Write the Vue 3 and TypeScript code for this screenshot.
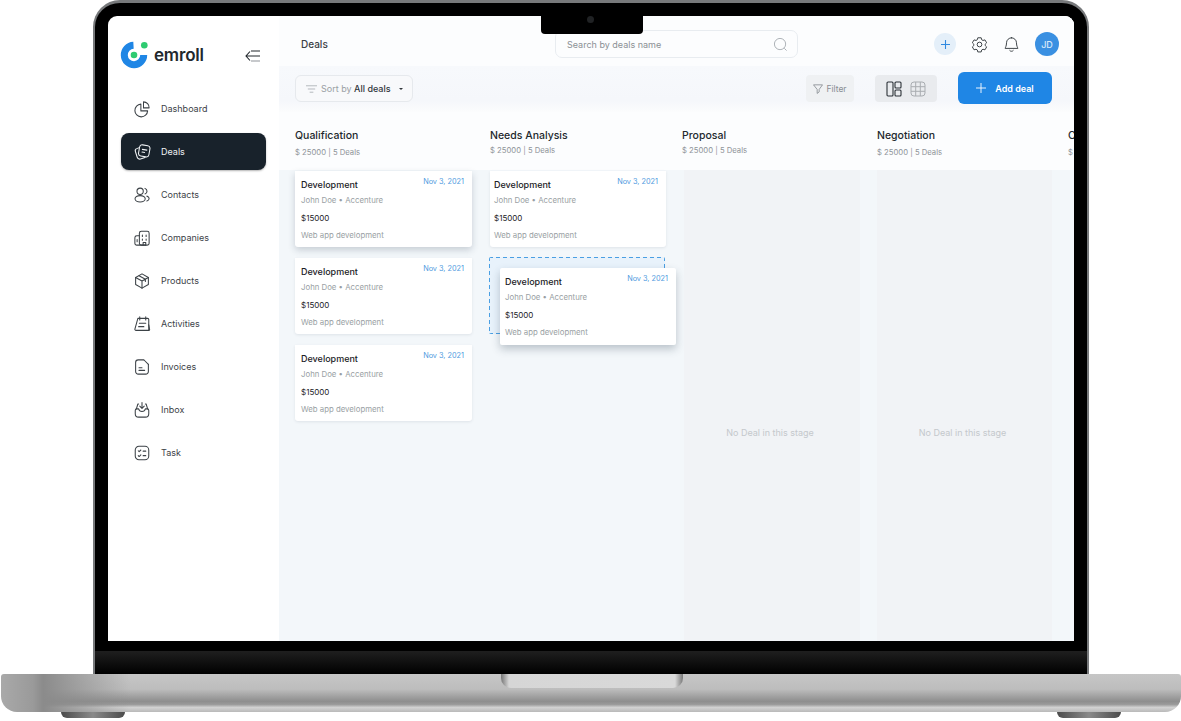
<script setup lang="ts">
const navItems = [
  { label: "Dashboard", icon: "dashboard" },
  { label: "Deals", icon: "deals", active: true },
  { label: "Contacts", icon: "contacts" },
  { label: "Companies", icon: "companies" },
  { label: "Products", icon: "products" },
  { label: "Activities", icon: "activities" },
  { label: "Invoices", icon: "invoices" },
  { label: "Inbox", icon: "inbox" },
  { label: "Task", icon: "task" },
];

const stages = ["Qualification", "Needs Analysis", "Proposal", "Negotiation", "Closed"];

const columns = [
  { id: "qualification", cards: 3 },
  { id: "needs", cards: 1, dropzone: true },
  { id: "proposal", cards: 0 },
  { id: "negotiation", cards: 0 },
];
</script>

<template>
  <div class="stage">
    <div class="lid">
      <div class="notch"><span class="camera"></span></div>
      <div class="screen">
        <aside class="sidebar">
          <div class="brand">
            <svg class="logo" viewBox="0 0 28 28" width="28" height="28">
              <path d="M13.500 4.300A9.700 9.700 0 1 0 23.700 14" fill="none" stroke="#1f86e5" stroke-width="7" />
              <circle cx="14" cy="14" r="3.300" fill="#2ecb71" />
              <circle cx="24.300" cy="4.300" r="3.300" fill="#2ecb71" />
            </svg>
            <span class="brand-name">emroll</span>
            <svg class="collapse" viewBox="0 0 16 12" width="16" height="12" fill="none" stroke="#22282d" stroke-width="1.100">
              <path d="M5 1.500 1 6l4 4.500M1 6h14" />
              <path d="M6 1h9" />
              <path d="M6 11h9" stroke="#8f9499" />
            </svg>
          </div>
          <nav class="nav">
            <a v-for="item in navItems" :key="item.label" class="nav-item" :class="{ 'nav-item--active': item.active }">
              <svg class="nav-icon" viewBox="0 0 24 24" width="18" height="18" fill="none" stroke="currentColor" stroke-width="1.400" stroke-linecap="round" stroke-linejoin="round">
                <template v-if="item.icon === 'dashboard'">
                  <path d="M10.500 5.500a8.500 8.500 0 1 0 9 9h-9z" />
                  <path d="M14 2.500a7.500 7.500 0 0 1 7.500 8H14z" />
                </template>
                <template v-else-if="item.icon === 'deals'">
                  <rect x="8" y="3" width="14" height="15" rx="3.500" transform="rotate(10 15 10.500)" />
                  <path d="M7.500 6.500 5 7.500a3 3 0 0 0-1.800 3.800l2.400 7.700A3.500 3.500 0 0 0 10 21.300l6-2" />
                  <path d="M12.500 8.500l6 1M12 12l3.500.6" />
                </template>
                <template v-else-if="item.icon === 'contacts'">
                  <circle cx="9.500" cy="7" r="4.200" />
                  <ellipse cx="9.500" cy="17" rx="6.800" ry="4.200" />
                  <path d="M16 3.200a3.900 3.900 0 0 1 0 7.400M18.500 13.500c2 .6 3 1.900 3 3.300s-1 2.700-3 3.300" />
                </template>
                <template v-else-if="item.icon === 'companies'">
                  <rect x="8.500" y="3" width="13" height="18.500" rx="2.500" />
                  <path d="M8.500 9H5a2.500 2.500 0 0 0-2.500 2.500v7.500A2.500 2.500 0 0 0 5 21.500h11.500" />
                  <path d="M12.500 8v2M17.500 8v2M12.500 13.500v1.500M17.500 13.500v1.500M13.500 21.500V18h3.500v3.500M5.500 14v3" />
                </template>
                <template v-else-if="item.icon === 'products'">
                  <path d="M12 2.500l8.500 4.800v9.400L12 21.500l-8.500-4.800V7.300z" />
                  <path d="M3.500 7.300 12 12l8.500-4.700M12 12v9.500M8 5l8.500 4.700v3" />
                </template>
                <template v-else-if="item.icon === 'activities'">
                  <path d="M6.500 4.500h13a1.500 1.500 0 0 1 1.500 1.500v14.500H4a1.500 1.500 0 0 1-1.500-1.800z" />
                  <path d="M21 20.500c1 0 1.500-.5 1-2L21 13M9 2.500v4M17 2.500v4M8.500 11h8.500M7.500 15.500h7" />
                </template>
                <template v-else-if="item.icon === 'invoices'">
                  <path d="M14.500 2.500H7A3.500 3.500 0 0 0 3.500 6v12A3.500 3.500 0 0 0 7 21.500h10a3.500 3.500 0 0 0 3.500-3.500V8.500" />
                  <path d="M15 3l5.500 5.500M8 13h4M8 16.500h7.500" />
                </template>
                <template v-else-if="item.icon === 'inbox'">
                  <path d="M7.500 4H6.500L4.500 10.500M16.500 4h1l2 6.500" />
                  <path d="M12 2v7.500M9 6.800l3 3 3-3" />
                  <path d="M3 12.500c0-1 .8-2 2-2h2.500c.6 2.500 2.500 3.500 4.500 3.500s3.900-1 4.500-3.500H19c1.200 0 2 1 2 2V17a4.500 4.500 0 0 1-4.500 4.500h-9A4.500 4.500 0 0 1 3 17z" />
                </template>
                <template v-else>
                  <rect x="3" y="3" width="18" height="18" rx="5" />
                  <path d="M7 9l1.200 1.200L10.500 8M13.500 9.500H17M7 15.500l1.200 1.200 2.300-2.200M13.500 15.500H17" />
                </template>
              </svg>
              <span>{{ item.label }}</span>
            </a>
          </nav>
        </aside>

        <main class="main">
          <header class="topbar">
            <h1 class="page-title">Deals</h1>
            <div class="search">
              <span>Search by deals name</span>
              <svg viewBox="0 0 16 16" width="15" height="15" fill="none" stroke="#a9aeb3" stroke-width="1">
                <circle cx="7.500" cy="7.500" r="6" />
                <path d="M12 12l2.500 2.500" />
              </svg>
            </div>
            <div class="top-actions">
              <span class="round-plus">
                <svg viewBox="0 0 10 10" width="9" height="9" stroke="#2f89e0" stroke-width="1.200"><path d="M5 0v10M0 5h10" /></svg>
              </span>
              <svg class="gear" viewBox="0 0 24 24" width="17" height="17" fill="none" stroke="#30363b" stroke-width="1.300" stroke-linejoin="round">
                <path d="M9.600 2.500h4.800l.7 2.800 1.800 1 2.800-.8 2.400 4.100-2.100 2v1.800l2.100 2-2.400 4.100-2.800-.8-1.800 1-.7 2.800H9.600l-.7-2.800-1.800-1-2.800.8-2.400-4.100 2.100-2v-1.800l-2.100-2 2.400-4.100 2.800.8 1.800-1z" />
                <circle cx="12" cy="12" r="3.300" />
              </svg>
              <svg class="bell" viewBox="0 0 24 24" width="17" height="17" fill="none" stroke="#30363b" stroke-width="1.300" stroke-linecap="round" stroke-linejoin="round">
                <path d="M12 2.500a7 7 0 0 0-7 7c0 5-2 7-2 8h18c0-1-2-3-2-8a7 7 0 0 0-7-7z" />
                <path d="M9.500 20.500a3 3 0 0 0 5 0" />
              </svg>
              <span class="avatar">JD</span>
            </div>
          </header>

          <div class="toolbar">
            <button class="sort">
              <svg viewBox="0 0 12 8" width="11" height="8" fill="none" stroke="#a6abb0" stroke-width="0.900"><path d="M0 .5h12M2 4h8M4 7.500h4" /></svg>
              <span>Sort by <b>All deals</b></span>
              <i class="caret"></i>
            </button>
            <button class="filter">
              <svg viewBox="0 0 12 12" width="10" height="10" fill="none" stroke="#7b8186" stroke-width="0.900" stroke-linejoin="round"><path d="M.6 1h10.800L7.400 6.500v3L5 11.300V6.500z" /></svg>
              <span>Filter</span>
            </button>
            <div class="view-toggle">
              <svg viewBox="0 0 16 16" width="16" height="16" fill="none" stroke="#2a3036" stroke-width="1.100">
                <rect x="1" y="1" width="6" height="14" rx="1" />
                <rect x="9" y="1" width="6" height="6" rx="1" />
                <rect x="9" y="9" width="6" height="6" rx="1" />
              </svg>
              <svg viewBox="0 0 16 16" width="16" height="16" fill="none" stroke="#a9adb1" stroke-width="1">
                <rect x="1" y="1" width="14" height="14" rx="3" />
                <path d="M5.700 1v14M10.300 1v14M1 5.700h14M1 10.300h14" />
              </svg>
            </div>
            <button class="add-deal">
              <svg viewBox="0 0 10 10" width="10" height="10" stroke="#fff" stroke-width="0.900"><path d="M5 0v10M0 5h10" /></svg>
              <span>Add deal</span>
            </button>
          </div>

          <div class="stages">
            <div v-for="stage in stages" :key="stage" class="stage-head">
              <h2>{{ stage }}</h2>
              <p>$ 25000 | 5 Deals</p>
            </div>
          </div>

          <div class="board">
            <section v-for="col in columns" :key="col.id" class="column" :class="{ 'column--empty': !col.cards }">
              <article v-for="n in col.cards" :key="n" class="deal" :class="{ 'deal--raised': col.id === 'qualification' && n === 1 }">
                <div class="deal-top">
                  <h3>Development</h3>
                  <time>Nov 3, 2021</time>
                </div>
                <p class="muted">John Doe • Accenture</p>
                <p class="amount">$15000</p>
                <p class="muted">Web app development</p>
              </article>

              <div v-if="col.dropzone" class="dropzone">
                <article class="deal deal--drag">
                  <div class="deal-top">
                    <h3>Development</h3>
                    <time>Nov 3, 2021</time>
                  </div>
                  <p class="muted">John Doe • Accenture</p>
                  <p class="amount">$15000</p>
                  <p class="muted">Web app development</p>
                </article>
              </div>

              <p v-if="!col.cards" class="empty-note">No Deal in this stage</p>
            </section>
          </div>
        </main>
      </div>
      <div class="chin"></div>
    </div>

    <div class="base"><span class="thumb"></span></div>
    <div class="feet"><span></span><span></span></div>
  </div>
</template>

<style>
html,
body {
  margin: 0;
  background: #fff;
}
</style>

<style scoped>
.stage {
  width: 1181px;
  height: 721px;
  overflow: hidden;
  display: flex;
  flex-direction: column;
  align-items: center;
  background: #fff;
  font-family: Inter, "Liberation Sans", sans-serif;
  color: #22282d;
}

/* ── Laptop ── */
.lid {
  position: relative;
  box-sizing: border-box;
  width: 996px;
  height: 674px;
  margin-left: 1px;
  padding: 13px 13px 0;
  display: flex;
  flex-direction: column;
  flex-shrink: 0;
  background: #000;
  border: 2px solid #77797b;
  border-bottom: 0;
  border-top-width: 3px;
  border-radius: 27px 27px 0 0;
}

.notch {
  position: absolute;
  top: 13px;
  left: 446px;
  width: 102px;
  height: 18px;
  z-index: 3;
  background: #000;
  border-radius: 0 0 4px 4px;
}

.camera {
  position: absolute;
  top: 0;
  left: 46px;
  width: 7px;
  height: 7px;
  border-radius: 50%;
  background: #202224;
}

.screen {
  height: 625px;
  display: flex;
  flex-shrink: 0;
  overflow: hidden;
  background: #fff;
  border-radius: 9px 9px 0 0;
}

.chin {
  flex: 1;
  margin: 10px -13px 0;
  background: linear-gradient(#1f1f1f, #000);
}

.base {
  position: relative;
  width: 1180px;
  height: 38px;
  flex-shrink: 0;
  border-radius: 3px 3px 16px 16px;
  background:
    linear-gradient(90deg, #a9a9a9 0, #9a9a9a 32px, #8b8b8b 42px, rgba(150, 150, 150, 0) 130px),
    linear-gradient(#c6c6c6 0, #bdbdbd 40%, #8e8e8e 72%, #9a9a9a 80%, #d2d2d2 88%, #b9b9b9 100%);
}

.thumb {
  position: absolute;
  top: 0;
  left: 500px;
  width: 182px;
  height: 14px;
  border-radius: 0 0 10px 10px;
  background: linear-gradient(90deg, #777 0, #d6d6d6 8px, #d9d9d9 174px, #777 100%);
}

.feet {
  width: 1060px;
  height: 9px;
  flex-shrink: 0;
  display: flex;
  justify-content: space-between;
}

.feet span {
  width: 64px;
  height: 6px;
  border-radius: 0 0 10px 10px;
  background: linear-gradient(90deg, #4b4b4b, #8a8a8a, #4b4b4b);
}

/* ── Sidebar ── */
.sidebar {
  width: 171px;
  flex-shrink: 0;
  box-sizing: border-box;
  padding: 25px 13px 0;
}

.brand {
  display: flex;
  align-items: center;
  height: 28px;
}

.logo {
  margin-left: -1px;
}

.brand-name {
  margin-left: 6px;
  font-size: 17px;
  font-weight: 600;
  letter-spacing: -0.2px;
}

.collapse {
  margin-left: auto;
  margin-right: 5px;
  margin-top: 2px;
}

.nav {
  display: flex;
  flex-direction: column;
  gap: 6px;
  margin-top: 21px;
}

.nav-item {
  height: 37px;
  display: flex;
  align-items: center;
  gap: 10px;
  padding-left: 12px;
  border-radius: 8px;
  font-size: 9px;
  color: #3c4247;
}

.nav-item--active {
  background: #18222b;
  color: #eef1f3;
  box-shadow: 0 1px 2px rgba(0, 0, 0, 0.3);
}

/* ── Main ── */
.main {
  flex: 1;
  min-width: 0;
  display: flex;
  flex-direction: column;
  background: #f3f7fa;
}

.topbar {
  height: 50px;
  flex-shrink: 0;
  box-sizing: border-box;
  display: flex;
  align-items: center;
  background: #fcfdfe;
  padding: 6px 0 0 22px;
}

.page-title {
  margin: 0;
  width: 254px;
  font-size: 10px;
  font-weight: 500;
  color: #3a4045;
}

.search {
  box-sizing: border-box;
  width: 243px;
  height: 28px;
  padding: 0 9px 0 11px;
  display: flex;
  align-items: center;
  justify-content: space-between;
  border: 1px solid #e8ecf0;
  border-radius: 7px;
  font-size: 9px;
  color: #8b9095;
}

.top-actions {
  margin-left: 136px;
  display: flex;
  align-items: center;
}

.round-plus {
  width: 22px;
  height: 22px;
  border-radius: 50%;
  display: flex;
  align-items: center;
  justify-content: center;
  background: #e4eff9;
}

.gear {
  margin-left: 15px;
}

.bell {
  margin-left: 15px;
}

.avatar {
  width: 24px;
  height: 24px;
  margin-left: 15px;
  border-radius: 50%;
  display: flex;
  align-items: center;
  justify-content: center;
  background: radial-gradient(circle, #4c9be6 0.6px, transparent 0.8px) 0 0 / 2px 2px, #2a86dd;
  color: #d8e9fa;
  font-size: 9px;
  font-weight: 500;
}

.toolbar {
  height: 46px;
  flex-shrink: 0;
  box-sizing: border-box;
  padding: 6px 22px 0 16px;
  display: flex;
  align-items: flex-start;
  background: linear-gradient(#f7f9fc, #f5f7fb 75%, #fbfcfd);
}

.toolbar button {
  font-family: inherit;
  padding: 0;
  border: 0;
  display: flex;
  align-items: center;
}

.sort {
  box-sizing: border-box;
  width: 118px;
  height: 27px;
  margin-top: 3px;
  padding-left: 10px !important;
  gap: 4px;
  border: 1px solid #e6e9ed !important;
  border-radius: 6px;
  background: #f8f9fb;
  font-size: 9px;
  color: #9a9fa4;
}

.sort b {
  font-weight: 500;
  color: #30363b;
}

.caret {
  margin-left: 4px;
  border: 2px solid transparent;
  border-top: 2.500px solid #30363b;
  border-bottom: 0;
}

.filter {
  width: 48px;
  height: 27px;
  margin-top: 3px;
  margin-left: auto;
  justify-content: center;
  gap: 3px;
  border-radius: 4px;
  background: #eff1f3;
  font-size: 8.500px;
  color: #898e93;
}

.view-toggle {
  width: 62px;
  height: 27px;
  margin-top: 3px;
  margin-left: 21px;
  display: flex;
  align-items: center;
  justify-content: center;
  gap: 8px;
  border-radius: 4px;
  background: #e9ebee;
}

.add-deal {
  width: 94px;
  height: 32px;
  margin-left: 21px;
  justify-content: center;
  gap: 9px;
  border-radius: 6px;
  background: #1f86e5;
  color: #fff;
  font-size: 9px;
  font-weight: 600;
}

.stages {
  height: 58px;
  flex-shrink: 0;
  box-sizing: border-box;
  padding: 17px 0 0 16px;
  display: flex;
  overflow: hidden;
  background: #fcfdfe;
}

.stage-head {
  flex: 0 0 195px;
}

.stage-head:nth-child(2) {
  flex-basis: 192px;
}

.stage-head:nth-child(4) {
  flex-basis: 191px;
}

.stage-head h2 {
  margin: 0;
  font-size: 10.500px;
  line-height: 13px;
  font-weight: 500;
  color: #22282d;
  white-space: nowrap;
}

.stage-head p {
  margin: 6px 0 0;
  font-size: 7.700px;
  color: #8f9499;
  white-space: nowrap;
}

.stage-head:nth-child(2) p,
.stage-head:nth-child(3) p {
  margin-top: 4px;
}

.board {
  flex: 1;
  min-height: 0;
  padding-left: 16px;
  display: flex;
  gap: 18px;
}

.column {
  position: relative;
  flex: 0 0 176px;
  box-sizing: border-box;
  padding-top: 1px;
  display: flex;
  flex-direction: column;
  gap: 11px;
}

.column:first-child {
  flex-basis: 177px;
}

.column:nth-child(2) .deal {
  padding-left: 4px;
}

.column:nth-child(4) {
  flex-basis: 175px;
  margin-left: -1px;
}

.column--empty {
  background: #f1f3f6;
  align-items: center;
  padding: 257px 4px 0 0;
}

.empty-note {
  margin: 0;
  font-size: 9px;
  color: #c4c8cc;
}

.deal {
  box-sizing: border-box;
  height: 76px;
  padding: 6px 8px 0 6px;
  background: #fff;
  border-radius: 0 0 3px 3px;
  box-shadow: 0 1px 3px rgba(40, 60, 80, 0.1);
}

.deal--raised {
  box-shadow: 0 3px 7px rgba(40, 60, 80, 0.22);
}

.deal-top {
  display: flex;
  justify-content: space-between;
  align-items: flex-start;
  height: 14px;
}

.deal h3 {
  margin: 0;
  padding-top: 1px;
  font-size: 9px;
  line-height: 13px;
  font-weight: 500;
  color: #1c2226;
}

.deal time {
  font-size: 7.300px;
  line-height: 9px;
  color: #4f9be0;
}

.deal p {
  margin: 0;
}

.muted {
  font-size: 7.800px;
  line-height: 9px;
  color: #9a9fa4;
}

.deal .muted {
  margin-top: 5px;
}

.deal .amount {
  margin-top: 8px;
  font-size: 8px;
  line-height: 10px;
  color: #1c2226;
}

.deal .amount + .muted {
  margin-top: 8px;
}

/* dashes drawn with gradients, a dashed border comes out too short */
.dropzone {
  position: relative;
  height: 77px;
  box-sizing: border-box;
  margin: -1px 1px 0 -1px;
  border-radius: 2px;
  background:
    repeating-linear-gradient(90deg, #4a9fe3 0 4px, transparent 4px 7px) top / 100% 1px no-repeat,
    repeating-linear-gradient(90deg, #4a9fe3 0 4px, transparent 4px 7px) bottom / 100% 1px no-repeat,
    repeating-linear-gradient(#4a9fe3 0 4px, transparent 4px 7px) left / 1px 100% no-repeat,
    repeating-linear-gradient(#4a9fe3 0 4px, transparent 4px 7px) right / 1px 100% no-repeat,
    #e8f2fb;
}

.column:nth-child(2) .deal--drag {
  position: absolute;
  left: 11px;
  top: 11px;
  width: 176px;
  height: 77px;
  padding-left: 5px;
  border-radius: 2px;
  box-shadow: 0 4px 8px rgba(40, 60, 80, 0.28);
}
</style>
